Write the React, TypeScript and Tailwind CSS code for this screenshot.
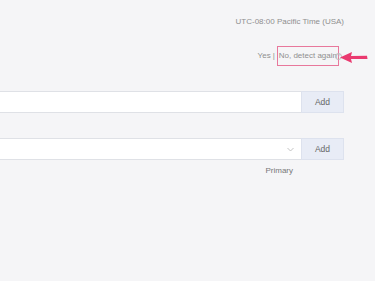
import React from "react";

export default function App() {
  return (
    <div
      className="relative w-[375px] h-[281px] overflow-hidden bg-[#f5f5f7] text-[8px] leading-[10px] text-[#8f8f8f]"
      style={{ fontFamily: '"Liberation Sans", Arial, sans-serif' }}
    >
      <div className="pt-[17px] pr-[31px] text-right">UTC-08:00 Pacific Time (USA)</div>

      <div className="mt-[19px] pr-[33px] flex justify-end items-center h-[20px]">
        <span>Yes</span>
        <span className="mx-[2px]">|</span>
        <span className="border border-[#e8789c] px-[1px] py-[4px] leading-[10px]">No, detect again</span>
        <span className="ml-[-4px] w-[7px] h-[7px] rounded-full border border-[#bbb] flex items-center justify-center text-[5px] leading-[5px] text-[#bbb]">?</span>
      </div>

      <div className="mt-[25px] pr-[31px] flex h-[22px]">
        <div className="flex-1 bg-white border-y border-[#dfe1e6]" />
        <div className="w-[43px] bg-[#e8ecf6] border border-[#dde2ee] flex items-center justify-center text-[#666] text-[8.5px]">
          Add
        </div>
      </div>

      <div className="mt-[25px] pr-[31px] flex h-[22px]">
        <div className="flex-1 bg-white border-y border-[#dfe1e6] flex items-center justify-end pr-[7px]">
          <svg width="7" height="5" viewBox="0 0 7 5">
            <path d="M0.5 1 L3.5 4 L6.5 1" fill="none" stroke="#b5b5b5" strokeWidth="0.8" />
          </svg>
        </div>
        <div className="w-[43px] bg-[#e8ecf6] border border-[#dde2ee] flex items-center justify-center text-[#666] text-[8.5px]">
          Add
        </div>
      </div>

      <div className="mt-[6px] pr-[82px] text-right text-[#777]">Primary</div>

      <svg className="absolute left-[338px] top-[50px]" width="32" height="15" viewBox="0 0 32 15">
        <path d="M2 7.5 L14 2 L13 6 L29 5.8 L29.5 9 L13 9 L14 13 Z" fill="#ea3a70" />
      </svg>
    </div>
  );
}
